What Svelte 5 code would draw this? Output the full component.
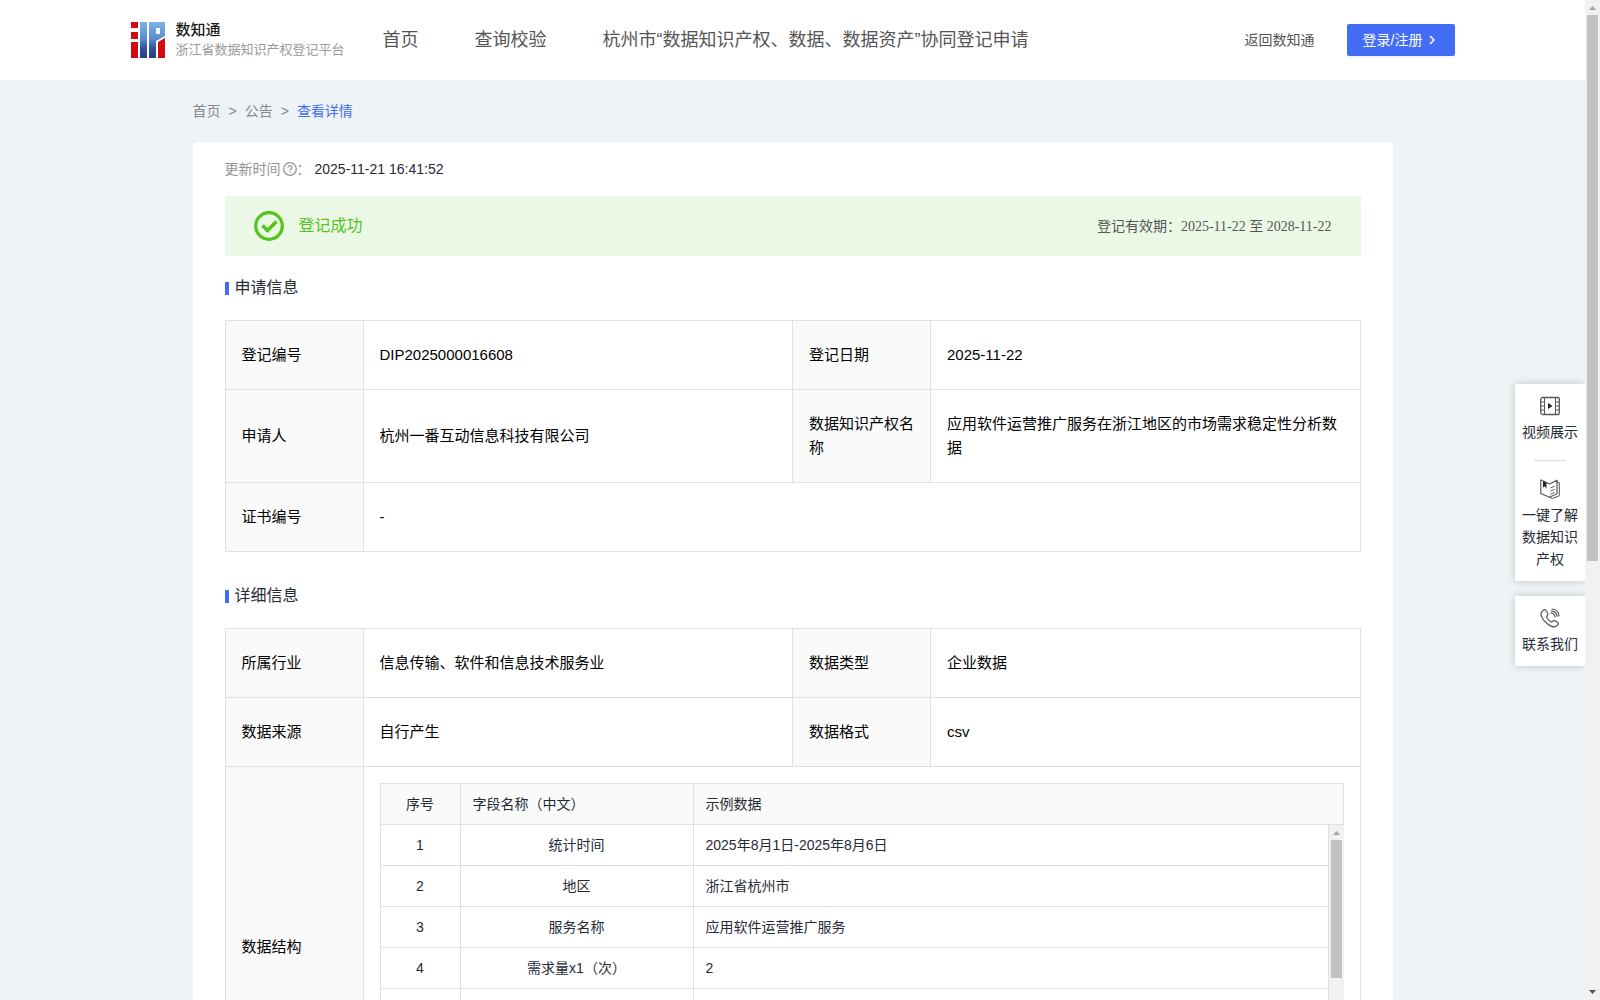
<script lang="ts">
  type Field = { name: string; sample: string };

  const navItems = ['首页', '查询校验', '杭州市“数据知识产权、数据、数据资产”协同登记申请'];

  const fields: Field[] = [
    { name: '统计时间', sample: '2025年8月1日-2025年8月6日' },
    { name: '地区', sample: '浙江省杭州市' },
    { name: '服务名称', sample: '应用软件运营推广服务' },
    { name: '需求量x1（次）', sample: '2' },
    { name: '', sample: '' }
  ];
</script>

{#snippet scrollbar(className: string)}
  <div class="scrollbar {className}" aria-hidden="true">
    <svg class="arrow" viewBox="0 0 15 15"><path d="M4 10h7L7.500 6z" fill="#a3a3a3" /></svg>
    <div class="track"><div class="thumb"></div></div>
    <svg class="arrow" viewBox="0 0 15 15"><path d="M4 5h7L7.500 9z" fill="#505050" /></svg>
  </div>
{/snippet}

<div class="page">
  <div class="view">
    <header class="topbar">
      <div class="topbar-inner">
        <a class="brand" href="#home">
          <svg class="logo" viewBox="0 0 34 36">
            <defs>
              <linearGradient id="logo-blue" gradientUnits="userSpaceOnUse" x1="0" y1="0" x2="0" y2="36">
                <stop offset="0" stop-color="#7fb2e6" />
                <stop offset="0.45" stop-color="#5b8fd0" />
                <stop offset="0.75" stop-color="#2f4f9c" />
                <stop offset="1" stop-color="#263f8c" />
              </linearGradient>
            </defs>
            <path d="M0 0h7v6H0zM0 10h7v7H0zM0 20h7v16H0z" fill="#d40c10" />
            <path d="M9 0h7v36H9z" fill="url(#logo-blue)" />
            <path d="M18 0h16v14l-9 5v17h-7zM25 6v6h4V6z" fill="url(#logo-blue)" fill-rule="evenodd" />
            <path d="M27 20l7-4v20h-7z" fill="#d40c10" />
          </svg>
          <span class="brand-text">
            <strong>数知通</strong>
            <small>浙江省数据知识产权登记平台</small>
          </span>
        </a>
        <nav>
          {#each navItems as item}
            <a href="#nav">{item}</a>
          {/each}
        </nav>
        <a class="back" href="#back">返回数知通</a>
        <button class="login" type="button">
          登录/注册
          <svg viewBox="0 0 12 12"><path d="M3 2l4 4-4 4" fill="none" stroke="#fff" stroke-width="1.500" /></svg>
        </button>
      </div>
    </header>

    <main>
      <nav class="breadcrumb" aria-label="breadcrumb">
        <a href="#home">首页</a>
        <span>&gt;</span>
        <a href="#notice">公告</a>
        <span>&gt;</span>
        <a class="current" href="#detail">查看详情</a>
      </nav>

      <section class="card">
        <div class="updated">
          <span>更新时间</span>
          <svg viewBox="0 0 14 14" fill="none" stroke="#909399">
            <circle cx="7" cy="7" r="6.300" stroke-width="1.300" />
            <path d="M5 5.600C5 3 9 3 9 5.500 9 7 7 6.900 7 8.600M7 9.600v1.200" stroke-width="1.200" />
          </svg>
          <span>：</span>
          <time>2025-11-21 16:41:52</time>
        </div>

        <div class="result">
          <svg viewBox="0 0 30 30" fill="none" stroke="#52c41a">
            <circle cx="15" cy="15" r="13.300" stroke-width="3.200" />
            <path d="M8.500 14.500l5 5 9-9" stroke-width="3.600" />
          </svg>
          <span class="result-text">登记成功</span>
          <span class="validity">登记有效期：<span class="dates">2025-11-22 至 2028-11-22</span></span>
        </div>

        <h2>申请信息</h2>
        <table class="info">
          <colgroup><col class="label-col" /><col /><col class="label-col" /><col /></colgroup>
          <tbody>
            <tr>
              <th scope="row">登记编号</th>
              <td>DIP2025000016608</td>
              <th scope="row">登记日期</th>
              <td>2025-11-22</td>
            </tr>
            <tr>
              <th scope="row">申请人</th>
              <td>杭州一番互动信息科技有限公司</td>
              <th scope="row">数据知识产权名称</th>
              <td>应用软件运营推广服务在浙江地区的市场需求稳定性分析数据</td>
            </tr>
            <tr>
              <th scope="row">证书编号</th>
              <td colspan="3">-</td>
            </tr>
          </tbody>
        </table>

        <h2 class="spaced">详细信息</h2>
        <table class="info">
          <colgroup><col class="label-col" /><col /><col class="label-col" /><col /></colgroup>
          <tbody>
            <tr>
              <th scope="row">所属行业</th>
              <td>信息传输、软件和信息技术服务业</td>
              <th scope="row">数据类型</th>
              <td>企业数据</td>
            </tr>
            <tr>
              <th scope="row">数据来源</th>
              <td>自行产生</td>
              <th scope="row">数据格式</th>
              <td>csv</td>
            </tr>
            <tr>
              <th scope="row">数据结构</th>
              <td class="nested" colspan="3">
                <table class="fields head">
                  <colgroup><col class="index-col" /><col class="name-col" /><col /></colgroup>
                  <thead>
                    <tr><th class="center">序号</th><th>字段名称（中文）</th><th>示例数据</th></tr>
                  </thead>
                </table>
                <div class="fields-body">
                  <div class="fields-scroll">
                    <table class="fields">
                      <colgroup><col class="index-col" /><col class="name-col" /><col /></colgroup>
                      <tbody>
                        {#each fields as field, i}
                          <tr>
                            <td class="center">{field.name ? i + 1 : ''}</td>
                            <td class="center">{field.name}</td>
                            <td>{field.sample}</td>
                          </tr>
                        {/each}
                      </tbody>
                    </table>
                  </div>
                  {@render scrollbar('inner')}
                </div>
              </td>
            </tr>
          </tbody>
        </table>
      </section>
    </main>

    <aside class="side">
      <div class="side-box">
        <a href="#video">
          <svg viewBox="0 0 20 20" fill="none" stroke="#55575f">
            <rect x="0.700" y="1.500" width="18.600" height="17" rx="2" stroke-width="1.300" />
            <path d="M4.500 1.500v17M15.500 1.500v17M1 6h3.500M1 10h3.500M1 14h3.500M15.500 6H19M15.500 10H19M15.500 14H19" />
            <path d="M8 7l4.500 3L8 13z" fill="#22242c" stroke="none" />
          </svg>
          视频展示
        </a>
        <hr />
        <a href="#guide">
          <svg viewBox="0 0 20 20" fill="none" stroke="#55575f" stroke-linejoin="round">
            <path d="M3 1.500L.8 1v13.500l8.700 3.700 7.500-3.400V1.200L9.500 5 6.500 3.600" stroke-width="1.200" />
            <path d="M17 3.200l2.300.6v13l-7 2.700-3-1.300" />
            <path d="M3 1.500v7.300l1.700-1.500 1.800 2.200V3z" fill="#22242c" stroke="none" />
            <path d="M10.500 9l4-2M10.500 12.200l4-2M10.500 15.300l4-2" />
          </svg>
          一键了解数据知识产权
        </a>
      </div>
      <div class="side-box">
        <a href="#contact">
          <svg viewBox="0 0 20 20" fill="none" stroke="#55575f" stroke-width="1.200" stroke-linecap="round" stroke-linejoin="round">
            <path d="M3 2.500C4 1.200 5.300 1.300 6 2.500l1.600 2.700c.6 1.100.3 1.900-.5 2.600-.9.800-.7 1.500.2 2.700 1 1.300 2 2.200 3.200 3 .9.600 1.500.5 2.200-.3.800-.8 1.600-1 2.600-.3l2.300 1.600c1.100.8 1.100 1.700.1 2.700-1.800 1.900-4 2.200-6.700.9C6.300 15.700 3 12.200 1.300 8 .4 5.700 1.200 4 3 2.500z" />
            <path d="M11 4.800c2.300.3 3.700 1.800 4 4M11.500 2.800c3.400.4 5.300 2.500 5.600 5.600M12 1c4 .4 6.600 3 7 6.800" />
          </svg>
          联系我们
        </a>
      </div>
    </aside>
  </div>
  {@render scrollbar('outer')}
</div>

<style>
  :global(body) {
    margin: 0;
  }

  .page {
    display: flex;
    height: 100vh;
    overflow: hidden;
    background: #eef3f6;
    color: #262a35;
    font-family: 'Liberation Sans', 'Noto Sans CJK SC', sans-serif;
    font-size: 14px;
    line-height: 22px;
  }

  .view {
    flex: 1;
    min-width: 0;
    overflow: hidden;
  }

  a {
    color: inherit;
    text-decoration: none;
  }

  .topbar {
    background: #fff;
  }

  .topbar-inner {
    display: flex;
    align-items: center;
    max-width: 1324px;
    height: 80px;
    margin: 0 auto;
  }

  .brand {
    display: flex;
    align-items: center;
    gap: 11px;
    width: 252px;
    flex-shrink: 0;
  }

  .logo {
    width: 34px;
    height: 36px;
    flex-shrink: 0;
  }

  .brand-text {
    display: flex;
    flex-direction: column;
    line-height: 20px;
    white-space: nowrap;
  }

  .brand-text strong {
    color: #1c1c1c;
    font-size: 15px;
    font-weight: 500;
  }

  .brand-text small {
    color: #9a9a9a;
    font-size: 13px;
  }

  .topbar nav {
    display: flex;
    flex: 1;
    gap: 56px;
    color: #555;
    font-size: 18px;
    line-height: 24px;
    white-space: nowrap;
  }

  .back {
    margin-right: 32px;
    color: #555;
    white-space: nowrap;
  }

  .login {
    display: flex;
    align-items: center;
    gap: 4px;
    height: 32px;
    padding: 0 16px;
    border: 0;
    border-radius: 2px;
    background: #446df5;
    box-shadow: 0 2px 0 rgba(0, 0, 0, 0.04);
    color: #fff;
    font: inherit;
    white-space: nowrap;
    cursor: pointer;
  }

  .login svg {
    width: 12px;
    height: 12px;
  }

  main {
    max-width: 1200px;
    margin: 0 auto;
  }

  .breadcrumb {
    display: flex;
    gap: 8px;
    padding: 20px 0;
    color: #85888e;
  }

  .breadcrumb .current {
    color: #446df5;
  }

  .card {
    padding: 16px 32px 32px;
    border-radius: 4px;
    background: #fff;
  }

  .updated {
    display: flex;
    align-items: center;
    margin-bottom: 16px;
    color: #909399;
  }

  .updated svg {
    width: 14px;
    height: 14px;
    margin-left: 2px;
  }

  .updated time {
    margin-left: 4px;
    color: #262a35;
  }

  .result {
    display: flex;
    align-items: center;
    height: 60px;
    padding: 0 29px;
    background: #ebf8e6;
  }

  .result svg {
    width: 30px;
    height: 30px;
  }

  .result-text {
    flex: 1;
    margin-left: 15px;
    color: #52c41a;
    font-size: 16px;
  }

  .validity {
    color: #555;
  }

  .dates {
    font-family: 'Liberation Serif', 'Noto Sans CJK SC', serif;
  }

  h2 {
    display: flex;
    align-items: center;
    gap: 6px;
    margin: 20px 0;
    font-size: 16px;
    font-weight: 400;
    line-height: 24px;
  }

  h2::before {
    width: 4px;
    height: 13px;
    background: #446df5;
    content: '';
  }

  h2.spaced {
    margin-top: 32px;
  }

  table {
    width: 100%;
    border-collapse: collapse;
    table-layout: fixed;
  }

  th,
  td {
    border: 1px solid #e0e0e0;
    font-weight: 400;
    text-align: left;
  }

  th {
    background: #fafafa;
  }

  .label-col {
    width: 138px;
  }

  .info {
    color: #000;
    font-size: 15px;
    line-height: 24px;
  }

  .info th,
  .info td {
    padding: 22px 16px;
  }

  .info td.nested {
    padding: 16px;
  }

  .index-col {
    width: 80px;
  }

  .name-col {
    width: 233px;
  }

  .fields {
    color: #262a35;
    font-size: 14px;
    line-height: 22px;
  }

  .info .fields th,
  .info .fields td {
    height: 22px;
    padding: 9px 12px;
  }

  .info .fields .center {
    text-align: center;
  }

  .fields-body {
    display: flex;
    height: 286px;
    overflow: hidden;
  }

  .fields-scroll {
    flex: 1;
    overflow: hidden;
  }

  .fields-scroll tr:first-child td {
    border-top: 0;
  }

  .scrollbar {
    display: flex;
    flex-direction: column;
    flex-shrink: 0;
    width: 15px;
    background: #f1f1f1;
  }

  .arrow {
    width: 15px;
    height: 15px;
  }

  .track {
    flex: 1;
    padding: 0 2px;
  }

  .thumb {
    background: #c1c1c1;
  }

  .outer .thumb {
    height: 56.3%;
  }

  .inner .thumb {
    height: 54%;
  }

  /* pinned over the page at the right edge */
  .side {
    position: absolute;
    top: 384px;
    right: 15px;
    display: flex;
    flex-direction: column;
    gap: 15px;
    width: 70px;
  }

  .side-box {
    padding: 12px 6px 11px;
    background: #fff;
    box-shadow: 0 0 8px rgba(0, 0, 0, 0.2);
    clip-path: inset(-10px 0 -10px -10px);
  }

  .side a {
    display: flex;
    flex-direction: column;
    align-items: center;
    gap: 5px;
    text-align: center;
  }

  .side svg {
    width: 20px;
    height: 20px;
  }

  .side hr {
    width: 32px;
    margin: 17px auto 18px;
    border: 0;
    border-top: 1px solid #dcdcdc;
  }
</style>
